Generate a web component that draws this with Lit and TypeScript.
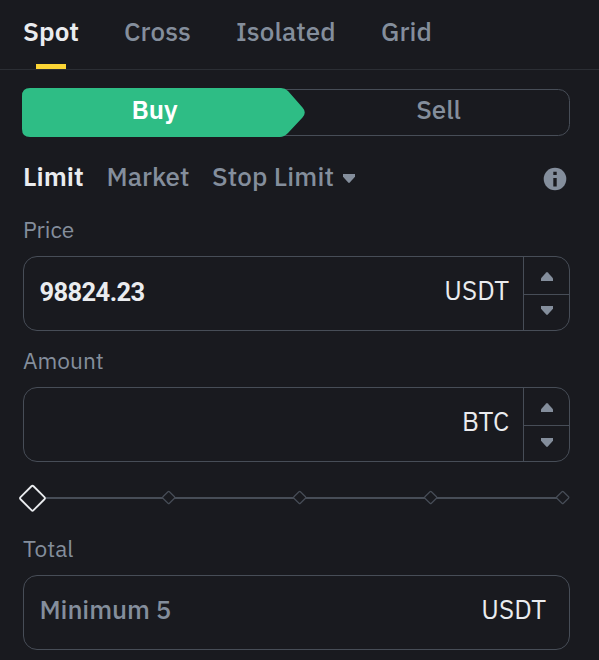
import { LitElement, html, css, svg } from "lit";
import { customElement } from "lit/decorators.js";

const up = html`<svg class="arrow" width="12" height="9" viewBox="0 0 12 9"><path d="M0 9V6.2L5.2 .4Q6 -.3 6.8 .4L12 6.2V9Z" /></svg>`;
const down = html`<svg class="arrow" width="12" height="9" viewBox="0 0 12 9"><path d="M0 0V2.8L5.2 8.6Q6 9.3 6.8 8.6L12 2.8V0Z" /></svg>`;
const steps = [168.7, 299.7, 430.7, 562.7];

@customElement("app-root")
export class AppRoot extends LitElement {
  static styles = css`
    :host {
      display: block;
      box-sizing: border-box;
      width: 599px;
      height: 660px;
      overflow: hidden;
      background: #191a1f;
      color: #848e9c;
      font: 500 26px/36px "IBM Plex Sans", Roboto, "Liberation Sans", sans-serif;
      white-space: nowrap;
    }
    * { box-sizing: border-box; }
    svg { display: block; flex: none; }
    .tabs {
      display: flex;
      gap: 46px;
      height: 70px;
      padding: 13px 0 0 23px;
      border-bottom: 1px solid #2b2e34;
    }
    .tab { position: relative; flex: none; letter-spacing: 0.1px; }
    .spot { width: 55px; }
    .cross { width: 66px; }
    .isolated { width: 99px; }
    .active { color: #eaecef; font-weight: 600; }
    .tab.active::after {
      content: "";
      position: absolute;
      left: 13px;
      top: 51px;
      width: 30px;
      height: 5px;
      background: #fcd535;
    }
    .panel { padding: 18px 29px 0 23px; }
    .sides {
      position: relative;
      display: grid;
      grid-template-columns: 265px 1fr;
      height: 49px;
      margin-left: -1px;
      padding-top: 3px;
      text-align: center;
    }
    .shape { position: absolute; left: 0; top: 0; }
    .side { position: relative; }
    .buy { color: #fff; font-weight: 600; }
    .sell { padding-left: 20px; }
    .types { display: flex; align-items: center; height: 36px; margin-top: 21px; }
    .types .arrow { margin-top: 5px; }
    .limit { width: 83.5px; }
    .market { width: 105.5px; }
    .stop { width: 131px; letter-spacing: 0.15px; }
    .info { margin: 6px 3px 0 auto; }
    .label {
      height: 30px;
      margin-top: 15px;
      font-size: 22.7px;
      line-height: 29px;
      font-weight: 400;
    }
    .types + .label { margin-top: 21px; }
    .slider + .label { margin-top: 22px; }
    .field {
      display: flex;
      height: 75px;
      margin-top: 11px;
      border: 1px solid #474d57;
      border-radius: 14px;
    }
    .value { flex: 1; padding: 15px 0 0 15.5px; letter-spacing: -0.1px; }
    .price {
      padding-top: 17px;
      color: #eaecef;
      font-family: Roboto, "Liberation Sans", sans-serif;
      font-size: 25.5px;
      font-weight: 700;
      letter-spacing: -0.6px;
    }
    .unit { padding: 15px 13.7px 0 0; color: #eaecef; font-weight: 400; letter-spacing: 0.2px; }
    .total { padding-right: 22.7px; }
    .stepper {
      display: grid;
      grid-template-rows: 37px 1fr;
      width: 46px;
      border-left: 1px solid #474d57;
    }
    .step { display: flex; align-items: center; justify-content: center; padding-top: 2px; }
    .step + .step { border-top: 1px solid #474d57; padding: 0 0 4px; }
    .amount .step + .step { padding-bottom: 2px; }
    .arrow { fill: #848e9c; }
    .slider { margin: 22px 0 0 -5px; }
  `;

  private stepper() {
    return html`<div class="stepper"><div class="step">${up}</div><div class="step">${down}</div></div>`;
  }

  render() {
    return html`
      <nav class="tabs">
        <span class="tab spot active">Spot</span>
        <span class="tab cross">Cross</span>
        <span class="tab isolated">Isolated</span>
        <span class="tab grid">Grid</span>
      </nav>
      <main class="panel">
        <div class="sides">
          <svg class="shape" width="548" height="49" viewBox="0 0 548 49">
            <rect x="2" y="1.5" width="545.5" height="46" rx="11" fill="none" stroke="#474d57" />
            <path fill="#2ebd85" d="M8 0H259Q263 0 266 3L280.5 19.5Q285 24.5 280.5 29.5L266 45Q262 49 258 49H8Q0 49 0 41V8Q0 0 8 0Z" />
          </svg>
          <span class="side buy">Buy</span>
          <span class="side sell">Sell</span>
        </div>
        <div class="types">
          <span class="limit active">Limit</span>
          <span class="market">Market</span>
          <span class="stop">Stop Limit</span>
          ${down}
          <svg class="info" width="24" height="24" viewBox="0 0 24 24">
            <circle cx="12" cy="12" r="11.3" fill="#848e9c" />
            <path fill="#191a1f" d="M10.3 4.7H13.7V8.1H10.3ZM10.3 11H13.7V19.6H10.3Z" />
          </svg>
        </div>
        <div class="label">Price</div>
        <div class="field">
          <span class="value price">98824.23</span><span class="unit">USDT</span>${this.stepper()}
        </div>
        <div class="label">Amount</div>
        <div class="field amount">
          <span class="value"></span><span class="unit">BTC</span>${this.stepper()}
        </div>
        <svg class="slider" width="552" height="28" viewBox="18 484 552 28">
          <path d="M46 498H563" stroke="#474d57" stroke-width="2" />
          ${steps.map((x) => svg`<rect x=${x - 4.6} y="492.9" width="9.2" height="9.2" rx="1" transform="rotate(45 ${x} 497.5)" fill="#191a1f" stroke="#474d57" stroke-width="1.2" />`)}
          <rect x="23.3" y="489" width="18.4" height="18.4" rx="1.5" transform="rotate(45 32.5 498.2)" fill="#191a1f" stroke="#eaecef" stroke-width="1.8" />
        </svg>
        <div class="label">Total</div>
        <div class="field">
          <span class="value">Minimum 5</span><span class="unit total">USDT</span>
        </div>
      </main>
    `;
  }
}
